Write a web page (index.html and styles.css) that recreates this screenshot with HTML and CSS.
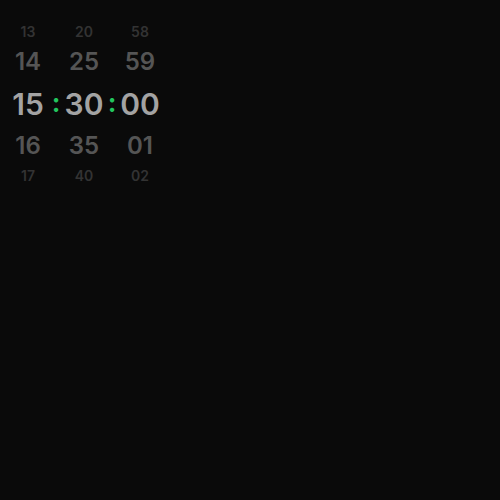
FILE: index.html
```html
<!DOCTYPE html>
<html>
<head>
<meta charset="utf-8">
<link rel="stylesheet" href="styles.css">
</head>
<body>
<div class="picker">
  <div class="col">
    <div class="cell far">13</div>
    <div class="cell near">14</div>
    <div class="cell sel">15</div>
    <div class="cell near">16</div>
    <div class="cell far">17</div>
  </div>
  <div class="sep">:</div>
  <div class="col">
    <div class="cell far">20</div>
    <div class="cell near">25</div>
    <div class="cell sel">30</div>
    <div class="cell near">35</div>
    <div class="cell far">40</div>
  </div>
  <div class="sep">:</div>
  <div class="col">
    <div class="cell far">58</div>
    <div class="cell near">59</div>
    <div class="cell sel">00</div>
    <div class="cell near">01</div>
    <div class="cell far">02</div>
  </div>
</div>
</body>
</html>
```
FILE: styles.css
```css
html {
  background: #0a0a0a;
}
body {
  margin: 8px;
  background: #0a0a0a;
  font-family: Inter, sans-serif;
}
.picker {
  display: flex;
  padding-top: 12px;
}
.col {
  width: 40px;
  display: flex;
  flex-direction: column;
  align-items: center;
}
.cell {
  text-align: center;
  font-weight: 600;
}
.far {
  height: 24px;
  line-height: 24px;
  font-size: 14px;
  color: #333333;
}
.near {
  height: 36px;
  line-height: 36px;
  font-size: 24px;
  color: #555555;
}
.sel {
  height: 48px;
  line-height: 48px;
  font-size: 30px;
  color: #a3a3a3;
}
.sep {
  width: 16px;
  margin-top: 60px;
  height: 45px;
  line-height: 45px;
  text-align: center;
  font-size: 26px;
  font-weight: 700;
  color: #22c55e;
}
```
